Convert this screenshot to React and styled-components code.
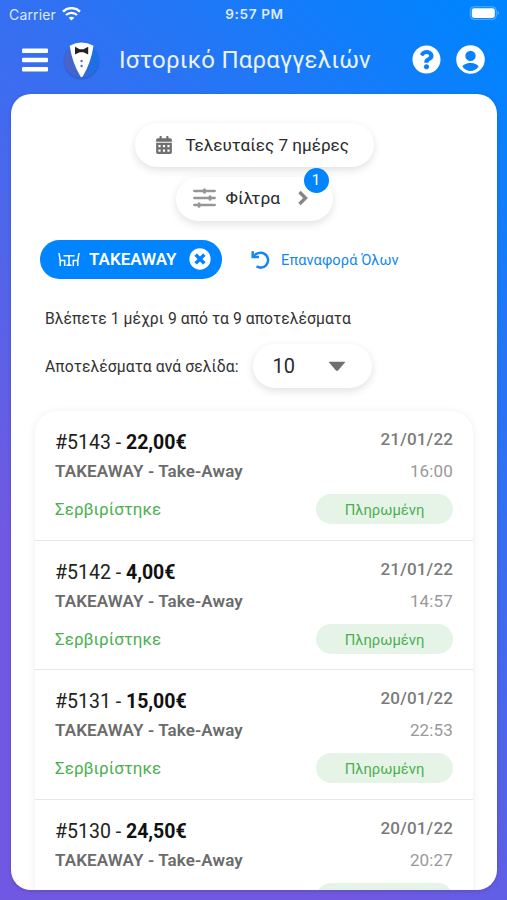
import React from "react";
import styled, { createGlobalStyle } from "styled-components";
import { FaQuestionCircle, FaCalendarAlt, FaTimesCircle } from "react-icons/fa";

const GlobalStyle = createGlobalStyle`
  * { box-sizing: border-box; }
  body { margin: 0; font-family: Roboto, "Noto Sans", sans-serif; }
  svg { display: block; flex: none; }
`;

const Screen = styled.div`
  height: 900px;
  width: 507px;
  overflow: hidden;
  display: flex;
  flex-direction: column;
  background: linear-gradient(225deg, #0084ff 3%, #7158e2 74%);
`;

const StatusBar = styled.div`
  height: 28px;
  flex: none;
  display: grid;
  grid-template-columns: 1fr auto 1fr;
  align-items: center;
  padding: 0 7px 0 9px;
  color: #dfe9ff;
  font: 400 14px Inter, sans-serif;
`;

const Carrier = styled.div`
  display: flex;
  align-items: center;
  gap: 6px;
  letter-spacing: 0.15px;
`;

const Clock = styled.div`
  font-weight: 600;
  font-size: 13.6px;
  letter-spacing: 0.6px;
`;

const BatterySlot = styled.div`
  justify-self: end;
  padding-bottom: 1px;
`;

const Header = styled.header`
  height: 66px;
  flex: none;
  display: flex;
  align-items: center;
  padding: 0 22px 2px;
  color: #fff;
`;

const LogoSlot = styled.div`
  margin: 0 0 1px 13px;
`;

const Title = styled.h1`
  margin: 0 0 0 17px;
  flex: 1;
  font-size: 24px;
  font-weight: 400;
  line-height: 32px;
  letter-spacing: 0.2px;
  white-space: nowrap;
  color: #eaf3ff;
`;

const HeaderActions = styled.div`
  display: flex;
  align-items: center;
  gap: 15px;
  padding-bottom: 2px;
`;

const Panel = styled.main`
  flex: none;
  width: 486px;
  height: 796px;
  margin-left: 11px;
  border-radius: 20px;
  overflow: hidden;
  background: #fff;
  box-shadow: 0 1px 4px rgba(0, 0, 0, 0.15);
  display: flex;
  flex-direction: column;
`;

const FilterButtons = styled.div`
  display: flex;
  flex-direction: column;
  align-items: center;
  gap: 10px;
  padding-top: 29px;
`;

const Pill = styled.button`
  position: relative;
  display: flex;
  align-items: center;
  flex: none;
  width: ${(p) => p.$width}px;
  height: 44px;
  padding: 0 ${(p) => p.$padRight}px ${(p) => p.$lift || 0}px ${(p) => p.$padLeft}px;
  border: 0;
  border-radius: 22px;
  background: #fff;
  box-shadow: 0 3px 8px rgba(0, 0, 0, 0.12);
  color: #2b2b2b;
  font: 400 ${(p) => p.$size}px Roboto, sans-serif;
  white-space: nowrap;
`;

const PillText = styled.span`
  margin-left: ${(p) => p.$gap || 0}px;
  flex: 1;
  text-align: left;
`;

const CountBadge = styled.span`
  position: absolute;
  right: 4px;
  top: -9px;
  width: 25px;
  height: 25px;
  border-radius: 50%;
  background: #0084ff;
  color: #fff;
  font-size: 15px;
  line-height: 25px;
  text-align: center;
`;

const ActiveFilters = styled.div`
  display: flex;
  align-items: center;
  height: 40px;
  margin: 19px 0 0 29px;
`;

const Chip = styled.div`
  display: flex;
  align-items: center;
  width: 182px;
  height: 39px;
  padding: 0 11px 1px 18px;
  border-radius: 20px;
  background: #0084ff;
  color: #fff;
`;

const ChipLabel = styled.span`
  flex: 1;
  margin-left: 9px;
  font-size: 17px;
  font-weight: 600;
`;

const ResetLink = styled.button`
  display: flex;
  align-items: center;
  gap: 11px;
  margin-left: 29px;
  padding: 1px 0 0;
  border: 0;
  background: none;
  color: #1388f5;
  font: 400 14.6px Roboto, sans-serif;
  letter-spacing: 0.1px;
  white-space: nowrap;
`;

const ResultText = styled.p`
  margin: 29px 0 0 34px;
  color: #333;
  font-size: 15.7px;
  line-height: 22px;
  letter-spacing: 0.06px;
`;

const PageSize = styled.div`
  display: flex;
  align-items: center;
  gap: 14px;
  margin: 14px 0 0 34px;
  color: #333;
  font-size: 15.7px;
  letter-spacing: 0.09px;
`;

const PageSizeLabel = styled.span`
  padding-top: 1px;
`;

const Orders = styled.section`
  flex: none;
  width: 438px;
  margin: 23px 0 0 24px;
  border-radius: 22px;
  box-shadow: 0 1px 9px rgba(0, 0, 0, 0.08);
`;

const Order = styled.article`
  height: 129.5px;
  display: grid;
  grid-template-columns: 1fr 137px;
  grid-template-rows: 30px 29px 1fr;
  padding: 16px 20px 0;
  border-bottom: 1.5px solid #e6e6e6;
  white-space: nowrap;
`;

const Amount = styled.div`
  color: #222;
  font-size: 19.5px;
  line-height: 32px;
  b { font-weight: 700; color: #111; }
`;

const DateText = styled.div`
  justify-self: end;
  color: #7b7b7b;
  font-size: 17px;
  font-weight: 500;
  line-height: 25px;
  letter-spacing: 0.15px;
`;

const Place = styled.div`
  color: #6b6b6b;
  font-size: 17px;
  font-weight: 600;
  line-height: 28px;
  letter-spacing: 0.12px;
`;

const TimeText = styled.div`
  justify-self: end;
  color: #999;
  font-size: 17px;
  line-height: 28px;
  letter-spacing: 0.15px;
`;

const ServeState = styled.div`
  padding-top: 8px;
  color: #4caf50;
  font-size: 17px;
  line-height: 30px;
`;

const PaidTag = styled.div`
  margin-top: 8px;
  height: 30px;
  border-radius: 15px;
  background: #e6f4e8;
  color: #4caf50;
  font-size: 14.8px;
  line-height: 32px;
  text-align: center;
`;

const orders = [
  { id: "5143", total: "22,00€", date: "21/01/22", time: "16:00" },
  { id: "5142", total: "4,00€", date: "21/01/22", time: "14:57" },
  { id: "5131", total: "15,00€", date: "20/01/22", time: "22:53" },
  { id: "5130", total: "24,50€", date: "20/01/22", time: "20:27" },
];

const WifiIcon = () => (
  <svg width="19" height="15" viewBox="0 0 19 15" fill="none" stroke="#fff" strokeWidth="2.4">
    <path d="M1 4.600C5.800 0 13.200 0 18 4.600" />
    <path d="M4 8C7 5.100 12 5.100 15 8" />
    <path d="M9.500 13.600 6.600 10.700C8.200 9.300 10.800 9.300 12.400 10.700Z" fill="#fff" stroke="none" />
  </svg>
);

const BatteryIcon = () => (
  <svg width="31" height="15" viewBox="0 0 31 15">
    <rect x="1.300" y="0.800" width="26" height="12.600" rx="3.800" fill="none" stroke="#fff" strokeOpacity=".35" />
    <rect x="2.800" y="2.300" width="23" height="9.600" rx="2.300" fill="#fff" />
    <path d="M28.700 5q2.600 2 0 4z" fill="#fff" fillOpacity=".4" />
  </svg>
);

const MenuIcon = () => (
  <svg width="26" height="24" viewBox="0 0 26 24" fill="#fff">
    <rect y="0.500" width="26" height="4.500" rx="1" />
    <rect y="9.700" width="26" height="4.500" rx="1" />
    <rect y="19" width="26" height="4.500" rx="1" />
  </svg>
);

const TuxedoLogo = () => (
  <svg width="41" height="42" viewBox="0 0 41 42">
    <defs>
      <linearGradient id="coat" x1="0" y1="0.600" x2="1" y2="0.400">
        <stop offset="0" stopColor="#5361c4" />
        <stop offset="1" stopColor="#1273ea" />
      </linearGradient>
      <filter id="coatShadow" x="-20%" y="-20%" width="140%" height="140%">
        <feDropShadow dx="0" dy="1" stdDeviation="0.9" floodColor="#123a90" floodOpacity=".55" />
      </filter>
    </defs>
    <circle cx="20.500" cy="21.500" r="17" fill="url(#coat)" filter="url(#coatShadow)" />
    <path d="M8.700 6.800Q20.500.2 32.500 6.800Q30 24 21.700 37.500Q20.600 39 19.500 37.500Q11.200 24 8.700 6.800Z" fill="#fff" />
    <path d="M14 7.800 18.700 10.200h3.800L27.200 7.800v7.800L22.500 13.300H18.700L14 15.600Z" fill="#222" />
    <circle cx="20.600" cy="22" r="1.200" fill="#5472c4" />
    <circle cx="20.600" cy="27" r="1.200" fill="#5472c4" />
  </svg>
);

const AccountIcon = () => (
  <svg width="29" height="29" viewBox="0 0 29 29">
    <path
      fill="#fff"
      fillRule="evenodd"
      d="M14.500.2a14.300 14.300 0 1 1 0 28.600a14.300 14.300 0 1 1 0-28.600ZM14.500 5.700a5.200 5.200 0 1 0 0 10.400a5.200 5.200 0 1 0 0-10.400ZM14.500 17.900C10.500 17.900 6.500 19.800 6.500 21.700C8.300 24.300 11.200 25.900 14.500 25.900S20.700 24.300 22.500 21.700C22.500 19.800 18.500 17.900 14.500 17.900Z"
    />
  </svg>
);

const SlidersIcon = () => (
  <svg width="23" height="20" viewBox="0 0 23 20" fill="none" stroke="#969696" strokeWidth="2.300" strokeLinecap="round">
    <path d="M1.200 3H21.800M1.200 10H21.800M1.200 17H21.800" />
    <path d="M11.500 1.800v2.400M17 8.800v2.400M6 15.800v2.400" strokeWidth="3" />
  </svg>
);

const ChevronIcon = () => (
  <svg width="10" height="16" viewBox="0 0 10 16" fill="none" stroke="#858585" strokeWidth="3.400">
    <path d="m1.500 2 6 6-6 6" />
  </svg>
);

const TableIcon = () => (
  <svg width="22" height="16" viewBox="0 0 22 16" fill="none" stroke="#fff" strokeWidth="1.500">
    <path d="M1 2 2.200 9.500H6.700V15M2.200 9.500V15M21 2 19.800 9.500H15.300V15M19.800 9.500V15" />
    <path d="M5.500 4.800H16.500M11 4.800V14M8.500 14.300H13.500" />
  </svg>
);

const UndoIcon = () => (
  <svg width="19" height="20" viewBox="0 0 19 20" fill="none" stroke="#1388f5" strokeWidth="2.500">
    <path d="M1.700 1.300V7H8" />
    <path d="M2.300 6.600C4.800 3.200 9.400 1.800 13.200 3.700C17.700 6.200 18.300 12 15 15.300C12.300 17.900 8.500 18 5.500 16.400" />
  </svg>
);

const CaretIcon = () => (
  <svg width="18" height="11" viewBox="0 0 19 11">
    <path d="M1.500.5h16q1.200 0 .4.900L10.600 9.800q-1.100 1-2.200 0L1.100 1.400Q.3.5 1.500.5Z" fill="#707070" />
  </svg>
);

export default function App() {
  return (
    <Screen>
      <GlobalStyle />
      <StatusBar>
        <Carrier>Carrier <WifiIcon /></Carrier>
        <Clock>9:57 PM</Clock>
        <BatterySlot><BatteryIcon /></BatterySlot>
      </StatusBar>
      <Header>
        <MenuIcon />
        <LogoSlot><TuxedoLogo /></LogoSlot>
        <Title>Ιστορικό Παραγγελιών</Title>
        <HeaderActions>
          <FaQuestionCircle size={29} />
          <AccountIcon />
        </HeaderActions>
      </Header>
      <Panel>
        <FilterButtons>
          <Pill $width={239} $padLeft={20} $padRight={20} $size={17.1}>
            <FaCalendarAlt size={18} color="#707070" />
            <PillText $gap={13}>Τελευταίες 7 ημέρες</PillText>
          </Pill>
          <Pill $width={157} $padLeft={17} $padRight={25} $lift={2} $size={17.4}>
            <SlidersIcon />
            <PillText $gap={10}>Φίλτρα</PillText>
            <ChevronIcon />
            <CountBadge>1</CountBadge>
          </Pill>
        </FilterButtons>
        <ActiveFilters>
          <Chip>
            <TableIcon />
            <ChipLabel>TAKEAWAY</ChipLabel>
            <FaTimesCircle size={22} />
          </Chip>
          <ResetLink><UndoIcon />Επαναφορά Όλων</ResetLink>
        </ActiveFilters>
        <ResultText>Βλέπετε 1 μέχρι 9 από τα 9 αποτελέσματα</ResultText>
        <PageSize>
          <PageSizeLabel>Αποτελέσματα ανά σελίδα:</PageSizeLabel>
          <Pill $width={119} $padLeft={20} $padRight={26} $size={20}>
            <PillText>10</PillText>
            <CaretIcon />
          </Pill>
        </PageSize>
        <Orders>
          {orders.map((o) => (
            <Order key={o.id}>
              <Amount>#{o.id} - <b>{o.total}</b></Amount>
              <DateText>{o.date}</DateText>
              <Place>TAKEAWAY - Take-Away</Place>
              <TimeText>{o.time}</TimeText>
              <ServeState>Σερβιρίστηκε</ServeState>
              <PaidTag>Πληρωμένη</PaidTag>
            </Order>
          ))}
        </Orders>
      </Panel>
    </Screen>
  );
}
